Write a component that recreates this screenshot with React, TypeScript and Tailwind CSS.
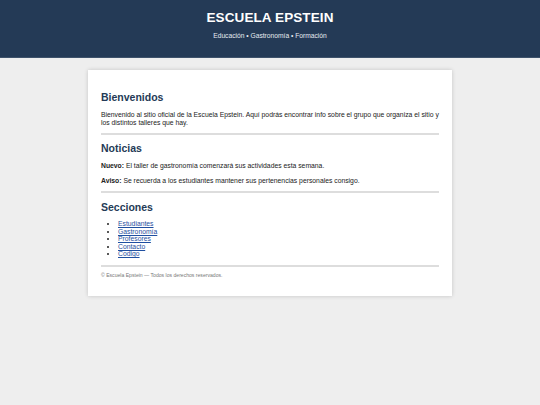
export default function App() {
  const secciones = ["Estudiantes", "Gastronomía", "Profesores", "Contacto", "Codigo"];

  return (
    <div className="min-h-[405px] bg-[#eeeeee] font-['Liberation_Sans',Arial,sans-serif] text-[#222]">
      <header className="flex h-[58px] flex-col items-center border-b border-[#3e526b] bg-[#243a56] text-white">
        <h1 className="mt-[10px] text-[13.5px] font-bold leading-[16px] tracking-[0.1px]">ESCUELA EPSTEIN</h1>
        <p className="mt-[5px] text-[6.7px] leading-[9px] text-[#e6ebf1]">Educación • Gastronomía • Formación</p>
      </header>

      <main className="pt-[12px]">
        <div className="mx-auto w-[364px] bg-white px-[13px] pb-[17px] pt-[20px] shadow-[0_0_4px_rgba(0,0,0,0.18)]">
          <section>
            <h2 className="text-[10.5px] font-bold leading-[14px] text-[#243a56]">Bienvenidos</h2>
            <p className="mt-[7px] text-[6.8px] leading-[8px]">
              Bienvenido al sitio oficial de la Escuela Epstein. Aquí podrás encontrar info sobre el grupo que organiza el sitio y los distintos talleres que hay.
            </p>
          </section>

          <hr className="mt-[6px] border-0 border-t-2 border-[#dddddd]" />

          <section>
            <h2 className="mt-[6px] text-[10.5px] font-bold leading-[14px] text-[#243a56]">Noticias</h2>
            <p className="mt-[7px] text-[6.8px] leading-[8px]">
              <strong>Nuevo:</strong> El taller de gastronomía comenzará sus actividades esta semana.
            </p>
            <p className="mt-[7px] text-[6.8px] leading-[8px]">
              <strong>Aviso:</strong> Se recuerda a los estudiantes mantener sus pertenencias personales consigo.
            </p>
          </section>

          <hr className="mt-[6px] border-0 border-t-2 border-[#dddddd]" />

          <section>
            <h2 className="mt-[7px] text-[10.5px] font-bold leading-[14px] text-[#243a56]">Secciones</h2>
            <ul className="mt-[6px] list-disc pl-[17px] text-[6.8px] leading-[7.6px]">
              {secciones.map((s) => (
                <li key={s}>
                  <a href="#" className="text-[#1f4fa0] underline">
                    {s}
                  </a>
                </li>
              ))}
            </ul>
          </section>

          <hr className="mt-[7px] border-0 border-t-2 border-[#dddddd]" />

          <footer className="mt-[5px] text-[5.1px] leading-[7px] text-[#777]">
            © Escuela Epstein — Todos los derechos reservados.
          </footer>
        </div>
      </main>
    </div>
  );
}
